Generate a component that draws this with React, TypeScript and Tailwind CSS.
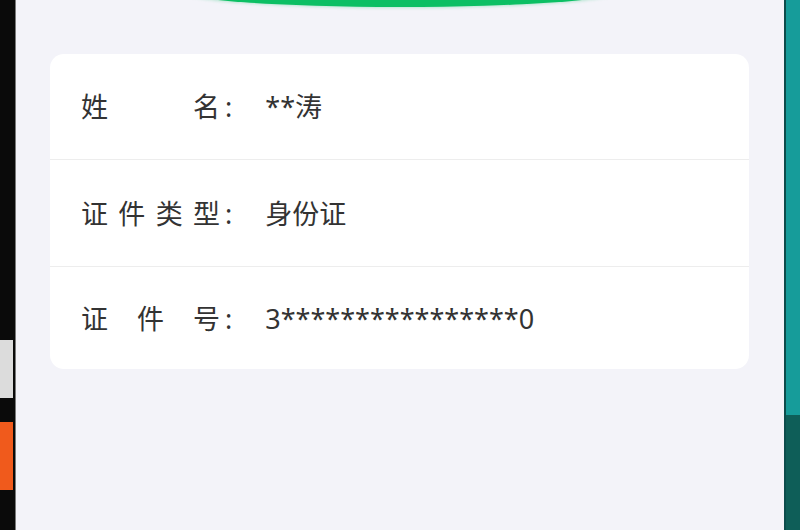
import React from "react";

const rows = [
  { label: ["姓", "名"], value: "**涛", h: "h-[106px]" },
  { label: ["证", "件", "类", "型"], value: "身份证", h: "h-[107px]" },
  { label: ["证", "件", "号"], value: "3****************0", h: "h-[102px]" },
];

export default function App() {
  return (
    <div
      className="flex h-[530px] w-[800px] overflow-hidden"
      style={{ fontFamily: '"Noto Sans", "Noto Sans CJK SC", sans-serif' }}
    >
      <div className="flex w-[16px] flex-col border-r border-[#7a7a7a] bg-[#0a0a0a]">
        <div className="h-[340px]" />
        <div className="h-[58px] w-[13px] bg-[#dcdcdc]" />
        <div className="h-[24px]" />
        <div className="h-[68px] w-[13px] bg-[#f05a1c]" />
      </div>
      <div className="relative flex-1 bg-[#f3f3f9] pl-[34px] pr-[35px] pt-[54px]">
        <div className="absolute left-[164px] top-[-25px] h-[32px] w-[440px] rounded-[50%] bg-[#0cbf64] shadow-[0_1px_3px_rgba(12,191,100,0.25)]" />
        <div className="overflow-hidden rounded-[14px] bg-white">
          {rows.map((r, i) => (
            <div
              key={i}
              className={`flex ${r.h} items-center pl-[31px] pt-[2px] text-[27px] text-[#333333] ${
                i < rows.length - 1 ? "border-b border-[#ededed]" : ""
              }`}
            >
              <div className="flex w-[139px] justify-between">
                {r.label.map((c, j) => (
                  <span key={j}>{c}</span>
                ))}
              </div>
              <span className="ml-[5px]">:</span>
              <div className="ml-[33px]">{r.value}</div>
            </div>
          ))}
        </div>
      </div>
      <div className="flex w-[16px] flex-col border-l-2 border-[#0c4c4c]">
        <div className="h-[415px] bg-[#169c9a]" />
        <div className="flex-1 bg-[#0e5e58]" />
      </div>
    </div>
  );
}
